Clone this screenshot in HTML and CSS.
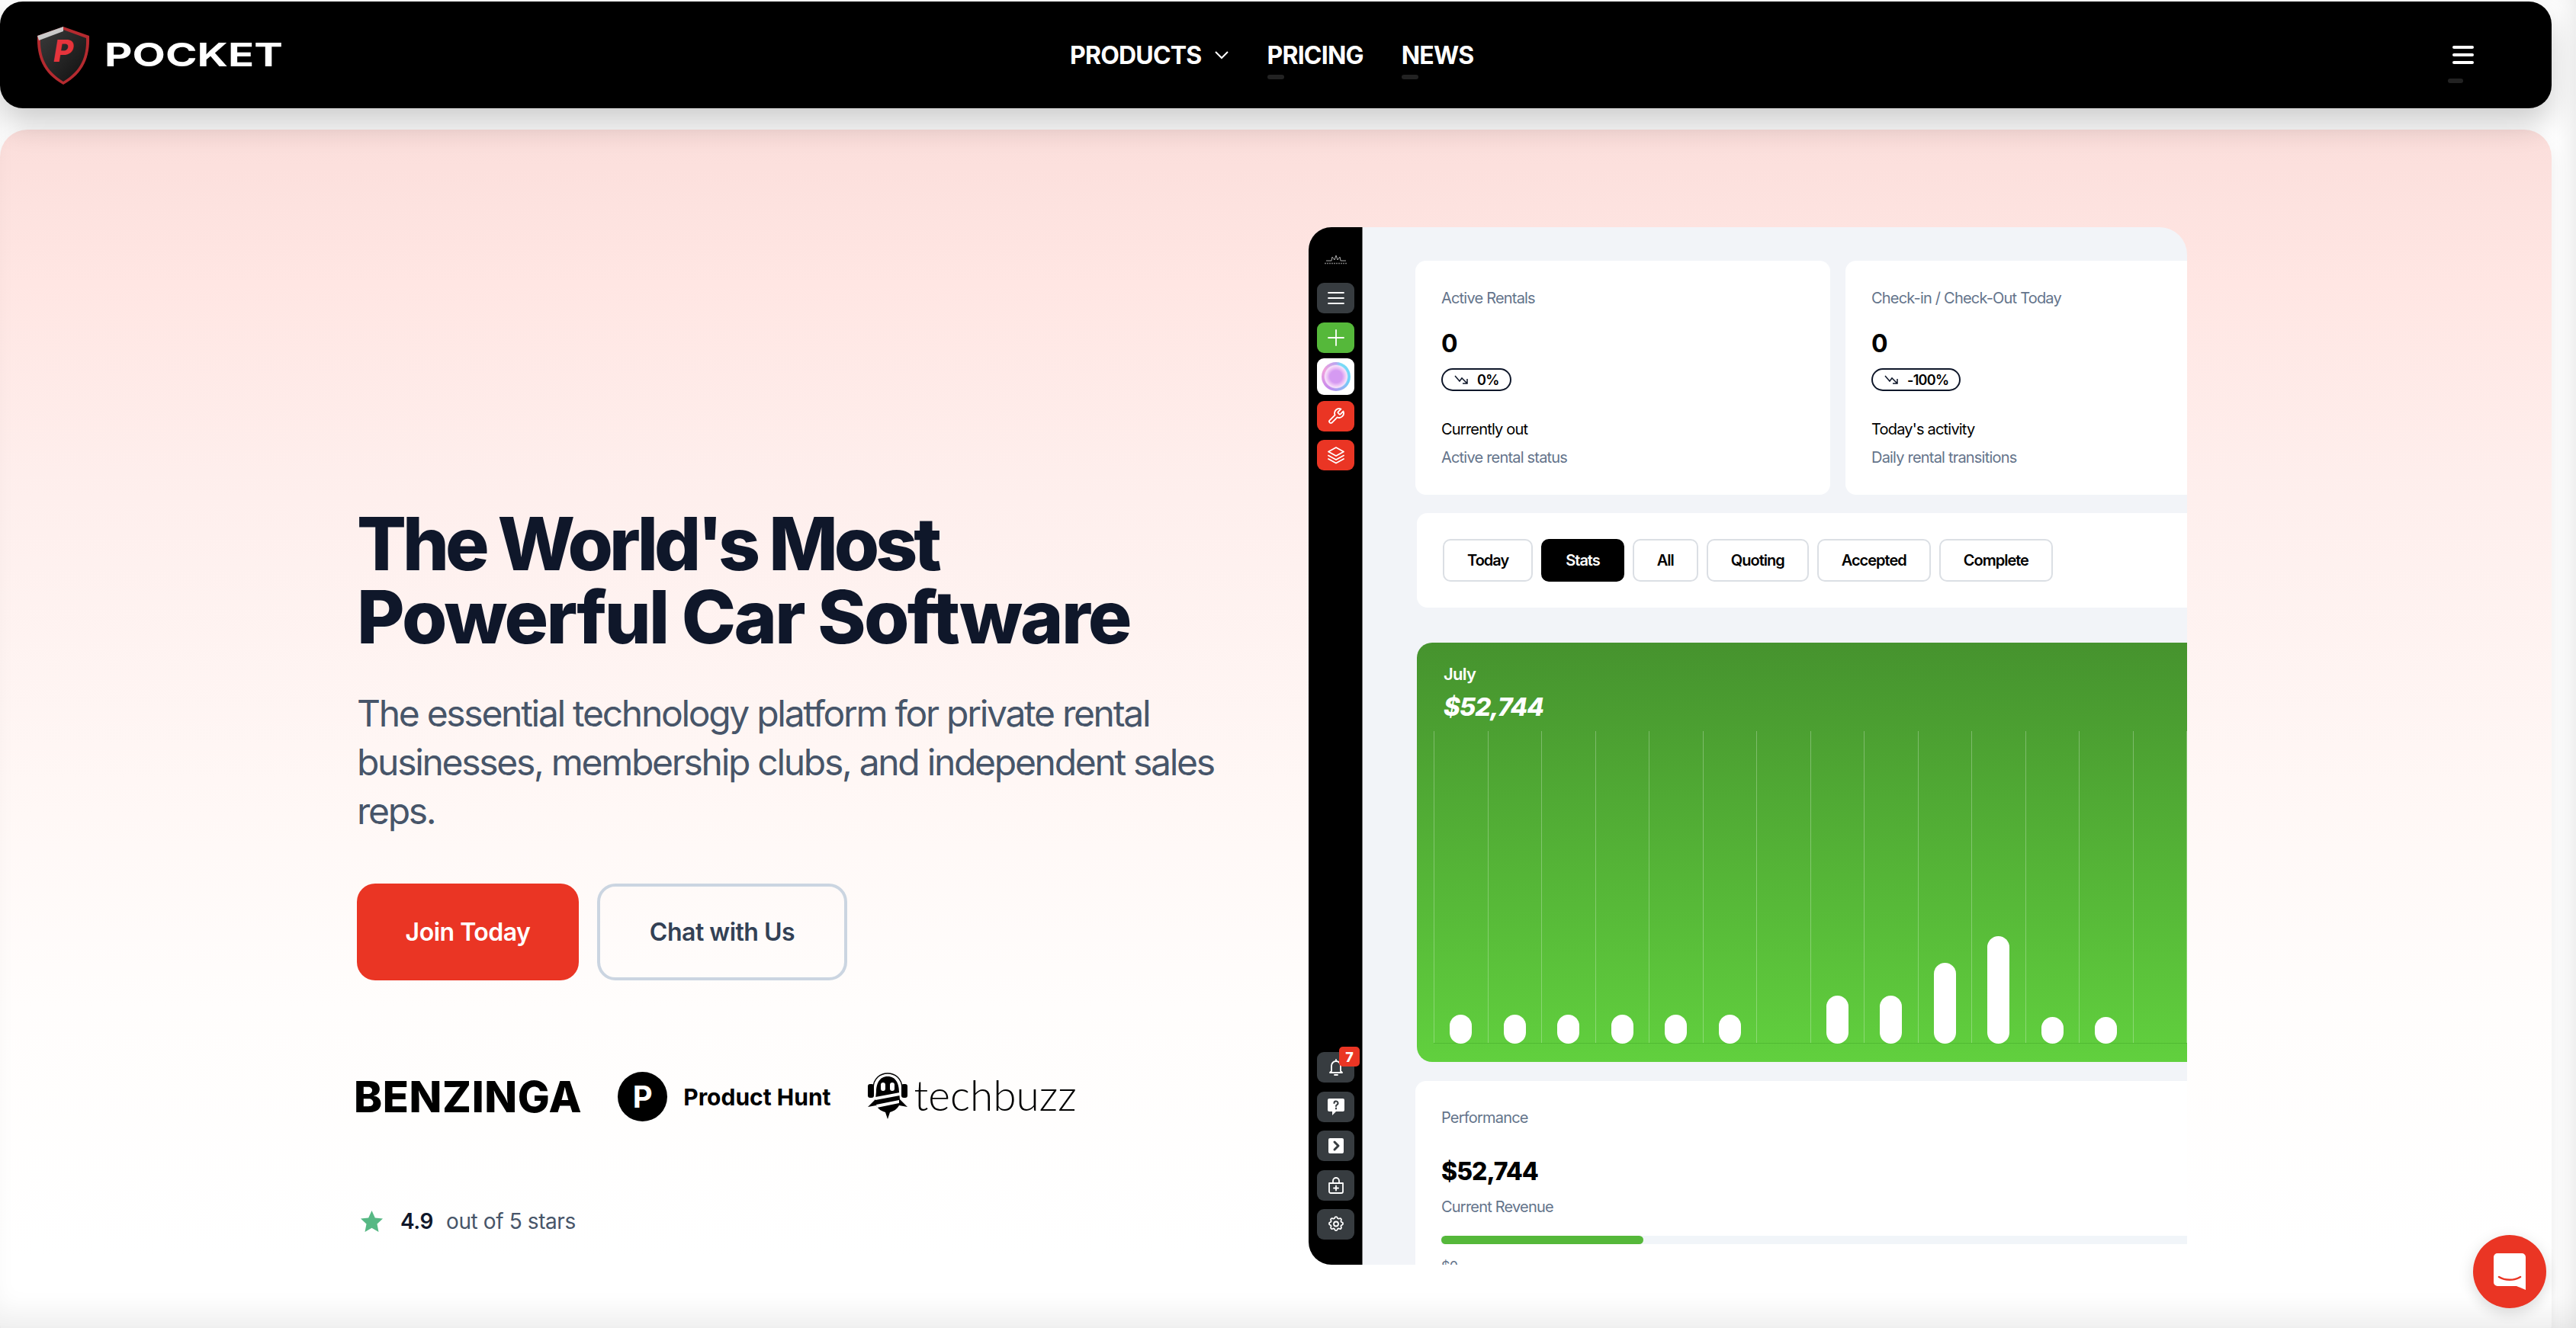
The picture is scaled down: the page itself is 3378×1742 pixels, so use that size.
FILE: index.html
```html
<!DOCTYPE html>
<html lang="en">
<head>
  <meta charset="UTF-8">
  <title>Pocket</title>
  <link rel="stylesheet" href="styles.css">
</head>
<body>
  <!-- Top navigation -->
  <header class="nav">
    <div class="nav-brand">
      <svg class="shield" viewBox="0 0 70 78">
        <defs>
          <linearGradient id="shieldBody" x1="0" y1="0" x2="1" y2="1">
            <stop offset="0" stop-color="#3a3a3a"/>
            <stop offset="1" stop-color="#101010"/>
          </linearGradient>
        </defs>
        <path d="M35 1 L69 13 C70 40 62 62 35 77 C8 62 0 40 1 13 Z" fill="#b52a2f"/>
        <path d="M35 5 L65 16 C66 40 58 59 35 73 C12 59 4 40 5 16 Z" fill="url(#shieldBody)"/>
        <path d="M35 1 L1 13 L3 19 L35 7 Z" fill="#c9c9c9"/>
        <text x="35" y="47" class="shield-p">P</text>
      </svg>
      <span class="wordmark">POCKET</span>
    </div>
    <nav class="nav-links">
      <a class="nav-link">PRODUCTS
        <svg class="chevron" viewBox="0 0 20 12"><path d="M2 2 L10 10 L18 2"/></svg>
      </a>
      <a class="nav-link con-marca">PRICING</a>
      <a class="nav-link con-marca">NEWS</a>
    </nav>
    <button class="burger con-marca"><span></span><span></span><span></span></button>
  </header>

  <main class="hero">
    <!-- Hero copy -->
    <section class="copy">
      <h1><span class="linea-uno">The World's Most</span><br>Powerful Car Software</h1>
      <p class="lead">The essential technology platform for private rental businesses, membership clubs, and independent sales reps.</p>
      <div class="cta">
        <a class="btn btn-red">Join Today</a>
        <a class="btn btn-line">Chat with Us</a>
      </div>
      <div class="press">
        <span class="benzinga">BENZINGA</span>
        <span class="ph"><span class="ph-circle">P</span><span class="ph-name">Product Hunt</span></span>
        <span class="tb">
          <svg class="bee" viewBox="0 0 54 62">
            <path d="M8 22 C8 8 18 2 27 2 C36 2 46 8 46 22" fill="none" stroke="#000" stroke-width="1.5"/>
            <rect x="1" y="16" width="8" height="18" rx="3"/>
            <rect x="45" y="16" width="8" height="18" rx="3"/>
            <path d="M27 6 C38 6 42 16 42 26 L43 36 L53 46 L42 44 C39 50 33 52 30 53 L27 62 L24 53 C21 52 15 50 12 44 L1 46 L11 36 L12 26 C12 16 16 6 27 6 Z"/>
            <rect x="18" y="14" width="6" height="11" rx="3" fill="#fff"/>
            <rect x="30" y="14" width="6" height="11" rx="3" fill="#fff"/>
            <path d="M11 33 L43 27 L43 31 L11 37 Z M12 43 L42 37 L42 41 L13 47 Z" fill="#fff"/>
          </svg>
          <span class="tb-name">techbuzz</span>
        </span>
      </div>
      <div class="rating">
        <svg class="star" viewBox="0 0 30 30"><path d="M15 1 L19.3 10.4 L29.5 11.6 L22 18.6 L24 29 L15 23.8 L6 29 L8 18.6 L.5 11.6 L10.7 10.4 Z"/></svg>
        <strong>4.9</strong>
        <span>out of 5 stars</span>
      </div>
    </section>

    <!-- App mockup -->
    <section class="app">
      <aside class="side">
        <div class="side-group">
          <svg class="side-logo" viewBox="0 0 32 12"><path d="M3 7 H10 L11 2 L14 6 L16 0 L18 6 L21 2 L22 7 H29"/><path class="side-logo-txt" d="M1 10.5 H31"/></svg>
          <div class="side-items">
            <span class="ico gris"><svg viewBox="0 0 24 24"><path d="M2 5 H22 M2 12 H22 M2 19 H22"/></svg></span>
            <span class="ico verde"><svg viewBox="0 0 24 24"><path d="M12 2 V22 M2 12 H22"/></svg></span>
            <span class="ico blanco"><span class="wheel"></span></span>
            <span class="ico rojo"><svg viewBox="0 0 24 24"><path d="M14.7 6.3 a1 1 0 0 0 0 1.4 l1.6 1.6 a1 1 0 0 0 1.4 0 l3.8-3.8 a6 6 0 0 1-7.9 7.9 l-6.9 6.9 a2.1 2.1 0 0 1-3-3 l6.9-6.9 a6 6 0 0 1 7.9-7.9 z"/></svg></span>
            <span class="ico rojo"><svg viewBox="0 0 24 24"><path d="M12 2 L22 7.5 L12 13 L2 7.5 Z M2 12.5 L12 18 L22 12.5 M2 17 L12 22.5 L22 17"/></svg></span>
          </div>
        </div>
        <div class="side-items">
          <span class="ico gris"><svg viewBox="0 0 24 24"><path d="M6 17 V10 a6 6 0 0 1 12 0 V17 L20 19 H4 Z M10 22 H14 M12 2 V4"/></svg><b class="badge">7</b></span>
          <span class="ico gris"><svg viewBox="0 0 24 24"><path class="solid" d="M3 1 H21 a2 2 0 0 1 2 2 V16 a2 2 0 0 1-2 2 H12 L7 23 V18 H3 a2 2 0 0 1-2-2 V3 a2 2 0 0 1 2-2 Z"/><path class="dark" d="M9.5 7 a2.5 2.5 0 1 1 3.5 2.3 c-.7.4-1 .8-1 1.7 M12 13.5 V14.5"/></svg></span>
          <span class="ico gris"><svg viewBox="0 0 24 24"><rect class="solid" x="2" y="2" width="20" height="20" rx="2"/><path class="dark thick" d="M10 7 L15 12 L10 17"/></svg></span>
          <span class="ico gris"><svg viewBox="0 0 24 24"><path d="M3 9 H21 V20 a2 2 0 0 1-2 2 H5 a2 2 0 0 1-2-2 Z M8 9 V6 a4 4 0 0 1 8 0 V9 M12 12.5 V18.5 M9 15.5 H15"/></svg></span>
          <span class="ico gris"><svg viewBox="0 0 24 24"><path d="M10.3 3.3 C10.7 1.6 13.3 1.6 13.7 3.3 a1.7 1.7 0 0 0 2.6 1.1 c1.5-.9 3.3.8 2.4 2.4 a1.7 1.7 0 0 0 1.1 2.6 c1.7.4 1.7 3 0 3.4 a1.7 1.7 0 0 0-1.1 2.6 c.9 1.5-.8 3.3-2.4 2.4 a1.7 1.7 0 0 0-2.6 1.1 c-.4 1.7-3 1.7-3.4 0 a1.7 1.7 0 0 0-2.6-1.1 c-1.5.9-3.3-.8-2.4-2.4 a1.7 1.7 0 0 0-1.1-2.6 c-1.7-.4-1.7-3 0-3.4 a1.7 1.7 0 0 0 1.1-2.6 c-.9-1.5.8-3.3 2.4-2.4 a1.7 1.7 0 0 0 2.6-1.1 Z"/><circle cx="12" cy="11.5" r="3"/></svg></span>
        </div>
      </aside>

      <div class="panel">
        <div class="stat-row">
          <div class="stat">
            <div class="muted">Active Rentals</div>
            <div class="big">0</div>
            <span class="pill"><svg viewBox="0 0 20 14"><path d="M1 2 L7 9 L10 5 L17 12 M17 6 V12 H11"/></svg>0%</span>
            <div class="dark-line">Currently out</div>
            <div class="muted sub">Active rental status</div>
          </div>
          <div class="stat">
            <div class="muted">Check-in / Check-Out Today</div>
            <div class="big">0</div>
            <span class="pill"><svg viewBox="0 0 20 14"><path d="M1 2 L7 9 L10 5 L17 12 M17 6 V12 H11"/></svg>-100%</span>
            <div class="dark-line">Today's activity</div>
            <div class="muted sub">Daily rental transitions</div>
          </div>
        </div>

        <div class="tabs">
          <span class="tab">Today</span>
          <span class="tab activo">Stats</span>
          <span class="tab">All</span>
          <span class="tab">Quoting</span>
          <span class="tab">Accepted</span>
          <span class="tab">Complete</span>
        </div>

        <div class="green">
          <div class="green-head">
            <div class="month">July</div>
            <div class="total">$52,744</div>
          </div>
          <div class="chart">
            <div class="col"><i style="height:38px"></i></div>
            <div class="col"><i style="height:38px"></i></div>
            <div class="col"><i style="height:38px"></i></div>
            <div class="col"><i style="height:38px"></i></div>
            <div class="col"><i style="height:38px"></i></div>
            <div class="col"><i style="height:38px"></i></div>
            <div class="col"></div>
            <div class="col"><i style="height:63px"></i></div>
            <div class="col"><i style="height:63px"></i></div>
            <div class="col"><i style="height:106px"></i></div>
            <div class="col"><i style="height:141px"></i></div>
            <div class="col"><i style="height:35px"></i></div>
            <div class="col"><i style="height:35px"></i></div>
            <div class="col"></div>
            <div class="col"></div>
          </div>
        </div>

        <div class="perf">
          <div class="muted">Performance</div>
          <div class="perf-num">$52,744</div>
          <div class="muted perf-sub">Current Revenue</div>
          <div class="track"><div class="fill"></div></div>
          <div class="muted scale">$0</div>
        </div>
      </div>
    </section>
  </main>

  <!-- Chat launcher -->
  <button class="launcher">
    <svg viewBox="0 0 42 48"><path class="globo" d="M5 0 H37 a5 5 0 0 1 5 5 V48 L30 43 H5 a5 5 0 0 1-5-5 V5 a5 5 0 0 1 5-5 Z"/><path class="sonrisa" d="M7 31 C15 36 27 36 35 31"/></svg>
  </button>
</body>
</html>
```

FILE: styles.css
```css
* {
  box-sizing: border-box;
}
html, body {
  height: 100%;
}
body {
  margin: 0;
  height: 1742px;
  overflow: hidden;
  background: #fff;
  font-family: 'Inter', sans-serif;
  padding-top: 2px;
}
/* Grey fade along the bottom and right edges of the window */
body::after {
  content: '';
  position: fixed;
  inset: 0;
  pointer-events: none;
  z-index: 3;
  box-shadow: inset 0 -32px 36px -14px rgba(0,0,0,0.07), inset -22px 0 26px -12px rgba(0,0,0,0.07);
}
/* Navigation */
.nav {
  width: 3346px;
  height: 140px;
  background: #000;
  border-radius: 30px;
  box-shadow: 0 20px 40px rgba(0,0,0,0.2);
  display: flex;
  align-items: center;
  position: relative;
  z-index: 2;
}
.nav-brand {
  width: 1403px;
  padding-left: 48px;
  display: flex;
  align-items: center;
  gap: 19px;
}
.shield {
  width: 70px;
  height: 78px;
  margin-top: 2px;
}
.shield-p {
  font-family: 'Inter', sans-serif;
  font-weight: 800;
  font-style: italic;
  font-size: 40px;
  fill: #e5343c;
  text-anchor: middle;
}
.wordmark {
  font-family: 'Inter', sans-serif;
  font-weight: 700;
  font-size: 43px;
  color: #fff;
  display: inline-block;
  transform: scaleX(1.31);
  transform-origin: left center;
  margin-top: -2px;
}
.nav-links {
  display: flex;
  flex: 1;
  gap: 50px;
  align-items: center;
}
.nav-link {
  color: #fff;
  font-size: 32px;
  font-weight: 700;
  letter-spacing: -0.8px;
  display: flex;
  align-items: center;
  gap: 16px;
  position: relative;
}
.chevron {
  width: 20px;
  height: 12px;
  fill: none;
  stroke: #fff;
  stroke-width: 2;
}
.con-marca::after {
  content: '';
  position: absolute;
  left: 0;
  top: 45px;
  width: 22px;
  height: 6px;
  border-radius: 3px;
  background: #222;
}
.burger {
  position: relative;
  width: 28px;
  height: 24px;
  margin-right: 102px;
  padding: 0;
  background: none;
  border: none;
  display: flex;
  flex-direction: column;
  justify-content: space-between;
}
.burger span {
  height: 4px;
  background: #fff;
  border-radius: 2px;
}
.burger::after {
  left: -6px;
  top: 43px;
  width: 20px;
}
/* Hero */
.hero {
  width: 3346px;
  height: 1600px;
  margin-top: 28px;
  border-radius: 36px;
  background: linear-gradient(to bottom, #fbdedb 0, #ffe6e3 200px, #feefed 480px, #fff8f6 900px, #fffdfc 1150px, #fff 1480px);
  box-shadow: 0 10px 25px rgba(0,0,0,0.08);
  display: flex;
  padding: 128px 0 0 468px;
}
.copy {
  width: 1248px;
  padding-top: 367px;
}
h1 {
  margin: 0;
  font-size: 96px;
  line-height: 96px;
  font-weight: 800;
  letter-spacing: -2.7px;
  color: #0f172a;
}
.linea-uno {
  letter-spacing: -5px;
}
.lead {
  margin: 47px 0 0;
  width: 1200px;
  font-size: 48px;
  line-height: 64px;
  color: #475569;
  letter-spacing: -2.3px;
}
.cta {
  display: flex;
  gap: 24px;
  margin-top: 63px;
}
.btn {
  height: 127px;
  border-radius: 24px;
  font-size: 32px;
  font-weight: 600;
  letter-spacing: -0.5px;
  display: flex;
  align-items: center;
  justify-content: center;
}
.btn-red {
  width: 291px;
  background: #ea3524;
  color: #fff;
}
.btn-line {
  width: 328px;
  border: 4px solid #cbd5e1;
  color: #334155;
}
.press {
  display: flex;
  align-items: center;
  height: 69px;
  margin-top: 118px;
  margin-left: -4px;
  gap: 47px;
}
.benzinga {
  font-size: 56px;
  font-weight: 800;
  letter-spacing: 0.6px;
  color: #000;
}
.ph {
  display: flex;
  align-items: center;
  gap: 21px;
}
.ph-circle {
  width: 65px;
  height: 65px;
  border-radius: 50%;
  background: #000;
  color: #fff;
  font-size: 40px;
  font-weight: 700;
  display: flex;
  align-items: center;
  justify-content: center;
}
.ph-name {
  font-size: 30px;
  font-weight: 700;
  color: #000;
}
.tb {
  display: flex;
  align-items: center;
  gap: 8px;
}
.bee {
  width: 54px;
  height: 62px;
  margin-top: -4px;
}
.tb-name {
  font-family: 'Lato', sans-serif;
  font-weight: 300;
  font-size: 55px;
  color: #000;
  margin-top: -6px;
}
.rating {
  display: flex;
  align-items: center;
  height: 40px;
  margin-top: 109px;
  margin-left: 4px;
  font-size: 28px;
  letter-spacing: -0.4px;
  color: #475569;
}
.star {
  width: 31px;
  height: 30px;
  fill: #57b884;
  margin-right: 22px;
}
.rating strong {
  font-weight: 600;
  color: #0f172a;
  margin-right: 17px;
}
/* App mockup */
.app {
  width: 1152px;
  height: 1361px;
  display: flex;
  overflow: hidden;
  border-radius: 30px 36px 0 30px;
  flex-shrink: 0;
}
.side {
  width: 71px;
  background: #000;
  border-right: 1px solid #777;
  padding: 37px 0 33px 11px;
  display: flex;
  flex-direction: column;
  justify-content: space-between;
}
.side-logo {
  display: block;
  width: 32px;
  height: 12px;
  margin: 0 0 24px 9px;
  fill: none;
  stroke: #aaa;
  stroke-width: 1;
}
.side-logo-txt {
  stroke-width: 1.5;
  stroke-dasharray: 2 1;
  stroke: #777;
}
.side-items {
  display: flex;
  flex-direction: column;
  gap: 11.5px;
}
.ico {
  position: relative;
  width: 49px;
  height: 40px;
  border-radius: 9px;
  display: flex;
  align-items: center;
  justify-content: center;
}
.ico svg {
  width: 24px;
  height: 24px;
  fill: none;
  stroke: #fff;
  stroke-width: 1.8;
  stroke-linecap: round;
  stroke-linejoin: round;
}
.ico .solid {
  fill: #fff;
  stroke: none;
}
.ico .dark {
  stroke: #373c40;
  stroke-width: 2;
}
.ico .thick {
  stroke-width: 3;
}
.gris { background: #373c40; }
.verde { background: #55b83a; }
.rojo { background: #ea3524; }
.blanco {
  background: #fff;
  height: 48px;
  margin: -4px 0;
}
.wheel {
  width: 38px;
  height: 38px;
  border-radius: 50%;
  background: radial-gradient(circle closest-side, #d59af2 0 42%, #eec4f6 62%, #f6e2fa 76%, transparent 84%),
    conic-gradient(from 20deg, #79dcf6, #6fd0f8 90deg, #c488ee 190deg, #f0a0dc 280deg, #b9a4f0 340deg, #79dcf6);
}
.badge {
  position: absolute;
  right: -7px;
  top: -7px;
  width: 27px;
  height: 26px;
  border-radius: 5px;
  background: #ea3524;
  color: #fff;
  font-size: 18px;
  font-weight: 800;
  display: flex;
  align-items: center;
  justify-content: center;
}
.panel {
  width: 1081px;
  background: #f2f4f8;
  padding: 44px 0 0 69px;
  overflow: hidden;
}
.stat-row {
  display: flex;
  gap: 20px;
  width: 1200px;
}
.stat {
  width: 544px;
  height: 307px;
  flex-shrink: 0;
  background: #fff;
  border-radius: 14px;
  padding: 35px 34px 0;
}
.muted {
  font-size: 20px;
  line-height: 28px;
  letter-spacing: -0.8px;
  color: #64748b;
}
.big {
  margin-top: 26px;
  font-size: 32px;
  line-height: 40px;
  font-weight: 700;
  color: #000;
}
.pill {
  margin-top: 12px;
  display: inline-flex;
  align-items: center;
  gap: 10px;
  height: 30px;
  padding: 0 14px 0 15px;
  border: 2px solid #0f172a;
  border-radius: 15px;
  font-size: 18px;
  font-weight: 600;
  letter-spacing: -0.7px;
}
.pill svg {
  width: 20px;
  height: 14px;
  fill: none;
  stroke: #0f172a;
  stroke-width: 1.5;
}
.dark-line {
  margin-top: 36px;
  font-size: 20px;
  line-height: 28px;
  letter-spacing: -0.8px;
  color: #000;
}
.sub {
  margin-top: 9px;
}
.tabs {
  margin: 24px 0 0 2px;
  width: 1200px;
  height: 124px;
  background: #fff;
  border-radius: 14px;
  padding: 34px 34px 0;
  display: flex;
  gap: 11px;
  align-items: flex-start;
}
.tab {
  height: 56px;
  padding: 0 30px;
  border: 2px solid #dbdfe4;
  border-radius: 10px;
  font-size: 20px;
  font-weight: 600;
  letter-spacing: -1px;
  color: #000;
  display: flex;
  align-items: center;
}
.tab.activo {
  background: #000;
  border-color: #000;
  color: #fff;
}
.green {
  margin: 46px 0 0 2px;
  width: 1200px;
  height: 550px;
  border-radius: 20px;
  background: linear-gradient(to bottom, #46932e, #61d03e);
  color: #fff;
}
.green-head {
  height: 116px;
  padding: 27px 0 0 35px;
}
.month {
  font-size: 22px;
  line-height: 28px;
  font-weight: 600;
  letter-spacing: -0.7px;
}
.total {
  margin-top: 9px;
  font-size: 33px;
  line-height: 40px;
  font-weight: 800;
  font-style: italic;
  letter-spacing: -1px;
}
.chart {
  margin-left: 22px;
  height: 410px;
  display: flex;
  border-bottom: 1px solid rgba(0,80,0,0.15);
}
.col {
  width: 70.5px;
  flex-shrink: 0;
  border-left: 1px solid rgba(255,255,255,0.28);
  display: flex;
  align-items: flex-end;
  justify-content: center;
}
.col i {
  display: block;
  width: 29px;
  margin-bottom: -1px;
  border-radius: 15px;
  background: #fff;
}
.perf {
  margin-top: 25px;
  width: 1200px;
  height: 400px;
  background: #fff;
  border-radius: 14px;
  padding: 34px 34px 0;
}
.perf-num {
  margin-top: 37px;
  font-size: 32px;
  line-height: 40px;
  font-weight: 800;
  letter-spacing: -1px;
  color: #000;
}
.perf-sub {
  margin-top: 12px;
}
.track {
  margin-top: 24px;
  height: 11px;
  background: #f1f5f9;
}
.fill {
  width: 265px;
  height: 11px;
  border-radius: 6px;
  background: #55b83a;
}
.scale {
  margin-top: 16px;
  font-size: 18px;
}
/* Chat launcher */
.launcher {
  position: fixed;
  left: 3243px;
  top: 1620px;
  width: 96px;
  height: 96px;
  border: none;
  border-radius: 50%;
  background: #ea3524;
  box-shadow: 0 6px 20px rgba(0,0,0,0.15);
  display: flex;
  align-items: center;
  justify-content: center;
  padding: 0;
  z-index: 4;
}
.launcher svg {
  width: 42px;
  height: 48px;
}
.globo {
  fill: #fff;
}
.sonrisa {
  fill: none;
  stroke: #ea3524;
  stroke-width: 2.5;
  stroke-linecap: round;
}
```
